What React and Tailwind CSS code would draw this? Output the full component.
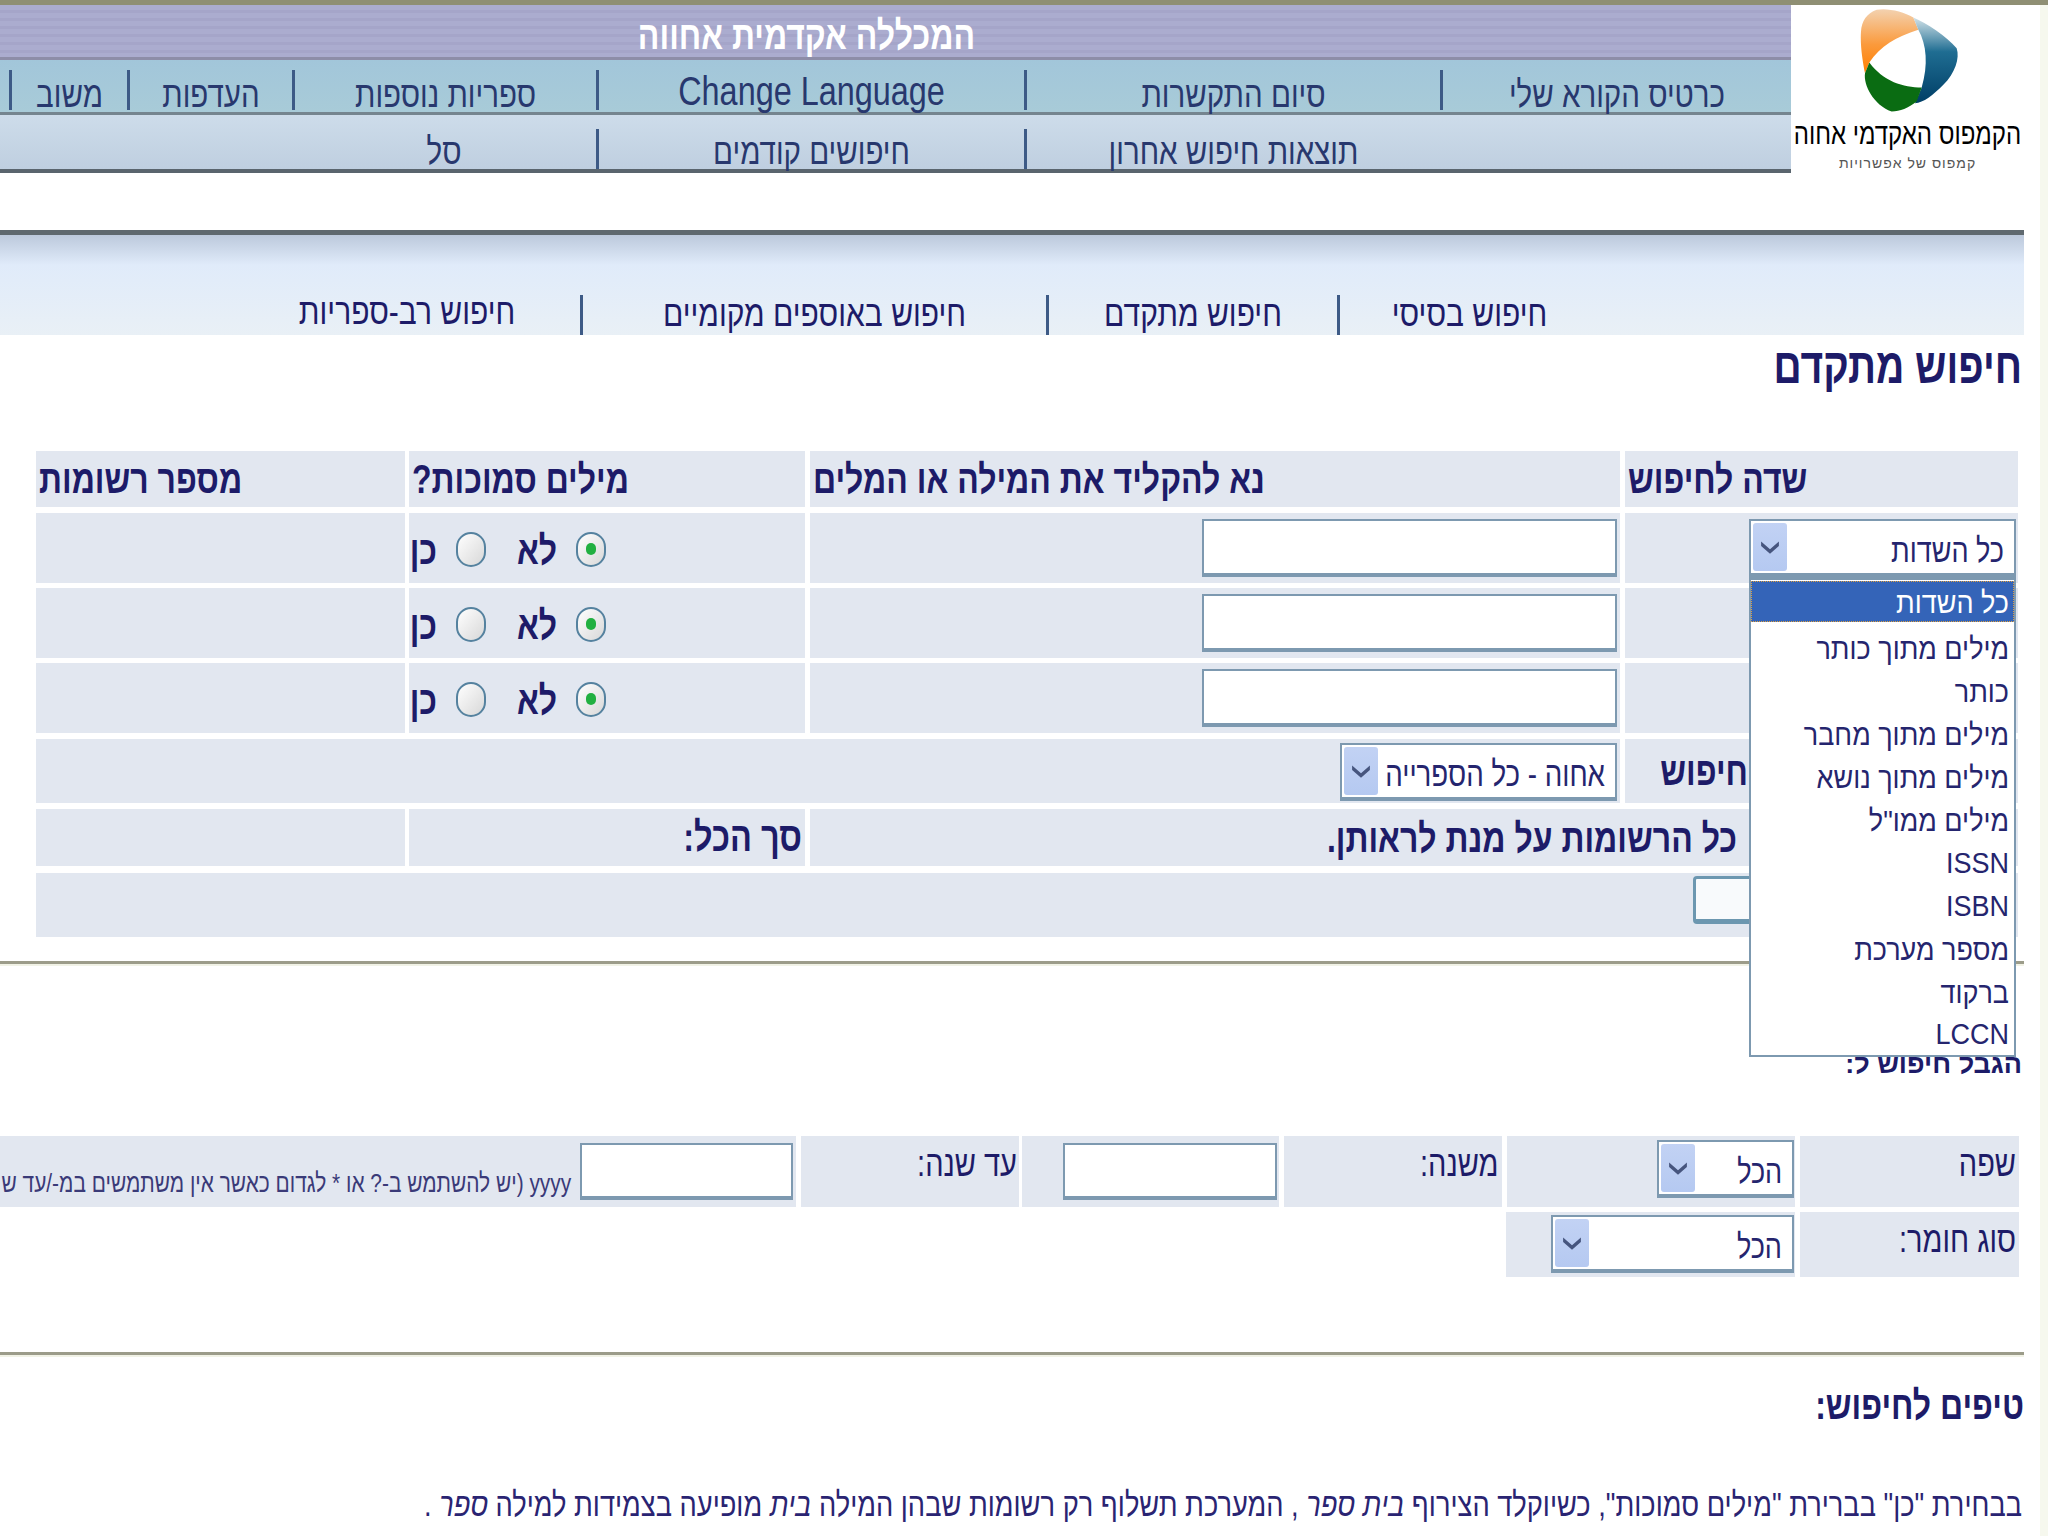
import React from "react";

const navy = "text-[#1d1b68]";

function Chevron() {
  return (
    <svg width="20" height="20" viewBox="0 0 18 18">
      <path d="M1 4 L9 11 L17 4 L17 8 L9 15 L1 8 Z" fill="#46557e" />
    </svg>
  );
}

function Select({ label, widthClass, textClass }) {
  return (
    <div className={`flex items-center justify-between h-[58px] bg-white border-2 border-b-4 border-[#7d99b0] pr-[10px] pl-[2px] ${widthClass}`}>
      <span className={`inline-block scale-y-125 translate-y-[4px] text-[#25256e] ${textClass}`}>{label}</span>
      <div className="flex items-center justify-center w-[34px] h-[48px] rounded-[3px] bg-gradient-to-b from-[#c2d2f4] to-[#b5c9f1]">
        <Chevron />
      </div>
    </div>
  );
}

function Radio({ checked }) {
  return (
    <div className="flex items-center justify-center w-[30px] h-[35px] rounded-full border-2 border-[#55829f] bg-gradient-to-br from-white to-[#d8d8d8] translate-y-[1px]">
      {checked && <div className="w-[10px] h-[12px] rounded-full bg-[#22b040]" />}
    </div>
  );
}

function RadioCell() {
  return (
    <div className="w-[396px] bg-[#e2e7f0] flex items-center pr-[199px] text-[32px] font-bold leading-none text-[#1d1b68]">
      <Radio checked />
      <span className="mr-[19px] w-[37px] inline-block scale-y-125 translate-y-[2px] whitespace-nowrap">לא</span>
      <div className="mr-[34px]"><Radio /></div>
      <span className="mr-[19px] inline-block scale-y-125 translate-y-[2px]">כן</span>
    </div>
  );
}

function TermRow({ first }) {
  return (
    <div className="flex gap-[5px] h-[70px] mt-[5px]">
      <div className="w-[393px] bg-[#e2e7f0] flex items-center pr-[2px]">
        {first && <Select label="כל השדות" widthClass="w-[267px]" textClass="text-[27px]" />}
      </div>
      <div className="w-[810px] bg-[#e2e7f0] flex items-center pr-[3px]">
        <input className="w-[415px] h-[58px] bg-white border-2 border-b-4 border-[#7d99b0]" />
      </div>
      <RadioCell />
      <div className="w-[369px] bg-[#e2e7f0] -mr-px" />
    </div>
  );
}

function HeadCell({ widthClass, children }) {
  return (
    <div className={`${widthClass} h-full bg-[#e2e7f0] flex items-center justify-end pl-[3px]`}>
      <span className={`inline-block scale-y-125 text-[32px] font-bold whitespace-nowrap ${navy}`}>{children}</span>
    </div>
  );
}

function Logo() {
  return (
    <div className="w-[249px] h-[168px] bg-white flex flex-col items-center relative">
      <svg width="100" height="107" viewBox="240 20 300 320" className="mt-[3px] -translate-x-[6px]">
        <defs>
          <linearGradient id="org" x1="0" y1="0" x2="0" y2="1">
            <stop offset="0" stopColor="#f3d2b0" />
            <stop offset="0.55" stopColor="#fb9a3c" />
            <stop offset="1" stopColor="#ff7f00" />
          </linearGradient>
          <linearGradient id="blu" x1="0" y1="0" x2="0" y2="1">
            <stop offset="0" stopColor="#d2e2e8" />
            <stop offset="0.4" stopColor="#1f6d92" />
            <stop offset="1" stopColor="#003e66" />
          </linearGradient>
        </defs>
        <path d="M268 183 C300 135 350 105 415 85 L400 48 C370 30 320 18 290 25 C260 35 245 60 243 90 C240 130 248 180 255 215 Z" fill="url(#org)" />
        <path d="M400 48 C440 65 500 105 530 140 C540 170 525 215 490 250 C460 280 430 305 405 305 L425 258 C445 190 440 130 415 85 Z" fill="url(#blu)" />
        <path d="M255 215 C250 250 280 310 335 330 C360 330 385 320 410 300 L425 258 C370 258 310 240 268 183 Z" fill="#0a6c12" />
      </svg>
      <span className="mt-[3px] inline-block scale-y-125 -translate-x-[8px] text-[24px] leading-[32px] text-black whitespace-nowrap">הקמפוס האקדמי אחוה</span>
      <span className="mt-[5px] -translate-x-[8px] text-[14px] tracking-[1px] leading-[16px] text-[#555] whitespace-nowrap">קמפוס של אפשרויות</span>
    </div>
  );
}

function NavCell({ widthClass, textClass = "text-[29.5px] translate-y-[5px]", children }) {
  return (
    <div className={`${widthClass} h-[40px] flex items-center justify-center border-l-[3px] border-[#3d5a86]`}>
      <span className={`inline-block scale-y-125 text-[#28386e] whitespace-nowrap ${textClass}`}>{children}</span>
    </div>
  );
}

function Nav() {
  return (
    <div className="w-[1791px]">
      <div className="h-[55px] flex items-center pr-[816px] border-b-[3px] border-[#8d8da8] bg-[repeating-linear-gradient(180deg,#abaccf_0px,#abaccf_5px,#a5a5c9_5px,#a5a5c9_8px)]">
        <span className="inline-block scale-y-125 translate-y-[4px] text-[32px] font-bold text-white whitespace-nowrap">המכללה אקדמית אחווה</span>
      </div>
      <div className="h-[55px] flex items-end pb-[2px] border-b-[3px] border-[#75858f] bg-gradient-to-b from-[#a2c6da] to-[#a8cbd8]">
        <NavCell widthClass="w-[351px]">כרטיס הקורא שלי</NavCell>
        <NavCell widthClass="w-[416px]">סיום התקשרות</NavCell>
        <NavCell widthClass="w-[428px]" textClass="text-[32.4px] translate-y-[1px]"><span dir="ltr">Change Language</span></NavCell>
        <NavCell widthClass="w-[304px]">ספריות נוספות</NavCell>
        <NavCell widthClass="w-[165px]">העדפות</NavCell>
        <NavCell widthClass="w-[118px]">משוב</NavCell>
      </div>
      <div className="h-[58px] flex items-end pr-[351px] border-b-[4px] border-[#5a656e] bg-gradient-to-b from-[#cddcea] to-[#bfcfe0]">
        <NavCell widthClass="w-[416px]" textClass="text-[29.5px] translate-y-[3px]">תוצאות חיפוש אחרון</NavCell>
        <NavCell widthClass="w-[428px]" textClass="text-[29.5px] translate-y-[3px]">חיפושים קודמים</NavCell>
        <div className="w-[304px] h-[40px] flex items-center justify-center">
          <span className="inline-block scale-y-125 translate-y-[3px] text-[29.5px] text-[#28386e]">סל</span>
        </div>
      </div>
    </div>
  );
}

function Tab({ widthClass, border = true, textClass = "", children }) {
  return (
    <div className={`${widthClass} h-[40px] flex items-center justify-center ${border ? "border-l-[3px] border-[#3d5a86]" : ""}`}>
      <span className={`inline-block scale-y-125 text-[30px] text-[#1d1b68] whitespace-nowrap ${textClass}`}>{children}</span>
    </div>
  );
}

function Rule() {
  return <div className="h-[5px] border-t-[3px] border-[#9c9c8a] bg-[#f1f2e6]" />;
}

function DropdownMenu() {
  const items = [
    ["מילים מתוך כותר", "h-[43px]"],
    ["כותר", "h-[43px]"],
    ["מילים מתוך מחבר", "h-[43px]"],
    ["מילים מתוך נושא", "h-[43px]"],
    ["מילים ממו\"ל", "h-[42px]"],
    ["ISSN", "h-[43px]"],
    ["ISBN", "h-[43px]"],
    ["מספר מערכת", "h-[44px]"],
    ["ברקוד", "h-[42px]"],
    ["LCCN", "h-[40px]"],
  ];
  return (
    <div className="absolute left-[1749px] top-[576px] w-[267px] h-[481px] bg-white border-2 border-t-[4px] border-[#7d99b0] pt-[1px] text-[27px] text-[#25256e]">
      <div className="h-[41px] flex items-center pr-[4px] bg-[#3464b8] text-white border border-dotted border-[#e0a040]">
        <span className="inline-block scale-y-110 translate-y-[2px]">כל השדות</span>
      </div>
      <div className="pt-[5px]">
        {items.map(([label, h]) => (
          <div key={label} className={`${h} flex items-center pr-[5px] whitespace-nowrap`}>
            <span className="inline-block scale-y-110 translate-y-[1px]">{label}</span>
          </div>
        ))}
      </div>
    </div>
  );
}

export default function App() {
  return (
    <div dir="rtl" className="relative w-[2048px] h-[1536px] overflow-hidden bg-white font-['Liberation_Sans',sans-serif]">
      <div className="h-[5px] bg-[#8f8f74]" />
      <div className="flex">
        <div className="w-[8px] h-[1531px] bg-[#f6f8ee]" />
        <div className="w-[2040px]">
          <div className="flex">
            <Logo />
            <Nav />
          </div>

          <div className="mr-[16px] w-[2024px]">
            <div className="mt-[57px] h-[105px] border-t-[5px] border-[#5f696f] bg-gradient-to-b from-[#bcc9dc] via-[#e0ebfa] via-30% to-[#e9f0f6] flex items-end pr-[425px]">
              <Tab widthClass="w-[262px]" textClass="-translate-y-[3px]">חיפוש בסיסי</Tab>
              <Tab widthClass="w-[291px]" textClass="-translate-y-[3px]">חיפוש מתקדם</Tab>
              <Tab widthClass="w-[466px]" textClass="-translate-y-[3px]">חיפוש באוספים מקומיים</Tab>
              <Tab widthClass="w-[346px]" border={false} textClass="-translate-y-[5px]">חיפוש רב-ספריות</Tab>
            </div>

            <div className={`h-[64px] flex items-center pr-[2px] text-[39px] font-bold ${navy}`}>
              <span className="inline-block scale-y-125">חיפוש מתקדם</span>
            </div>

            <div className="mt-[52px] mr-[6px] w-[1982px]">
              <div className="flex gap-[5px] h-[56px]">
                <HeadCell widthClass="w-[393px]">שדה לחיפוש</HeadCell>
                <HeadCell widthClass="w-[810px]">נא להקליד את המילה או המלים</HeadCell>
                <HeadCell widthClass="w-[396px]">מילים סמוכות?</HeadCell>
                <HeadCell widthClass="w-[369px] -mr-px">מספר רשומות</HeadCell>
              </div>
              <div className="h-[1px]" />
              <TermRow first />
              <TermRow />
              <TermRow />
              <div className="flex gap-[5px] h-[64px] mt-[6px]">
                <div className={`w-[393px] bg-[#e2e7f0] flex items-center pr-[270px] text-[32px] font-bold ${navy}`}>
                  <span className="inline-block scale-y-125">חיפוש</span>
                </div>
                <div className="w-[1584px] bg-[#e2e7f0] flex items-center pr-[3px]">
                  <Select label="אחוה - כל הספרייה" widthClass="w-[277px] translate-y-[1px]" textClass="text-[27.7px] whitespace-nowrap" />
                </div>
              </div>
              <div className="flex gap-[5px] h-[57px] mt-[6px]">
                <div className={`w-[1208px] bg-[#e2e7f0] flex items-center pr-[281px] text-[32px] font-bold ${navy}`}>
                  <span className="inline-block scale-y-125 whitespace-nowrap">כל הרשומות על מנת לראותן.</span>
                </div>
                <div className={`w-[396px] bg-[#e2e7f0] flex items-center pr-[3px] text-[32.5px] font-bold ${navy}`}>
                  <span className="inline-block scale-y-125">סך הכל:</span>
                </div>
                <div className="w-[369px] bg-[#e2e7f0] -mr-px" />
              </div>
              <div className="h-[64px] mt-[7px] bg-[#e2e7f0] flex items-start pt-[3px] pr-[200px]">
                <button className="w-[125px] h-[48px] rounded-[4px] bg-[#f8fafc] border-[3px] border-b-[5px] border-[#6c97b0]" />
              </div>
            </div>

            <div className="mt-[24px]"><Rule /></div>

            <div className={`mt-[83px] h-[30px] pr-[2px] text-[27px] font-bold ${navy} leading-[30px]`}>הגבל חיפוש ל:</div>

            <div className="mt-[57px] flex gap-[5px] mr-[5px] h-[71px]">
              <div className="w-[219px] bg-[#e2e7f0] pr-[3px] pt-[7px] text-[29px] text-[#1d1b68]">
                <span className="inline-block scale-y-125">שפה</span>
              </div>
              <div className="w-[289px] bg-[#e2e7f0] pr-[1px] pt-[4px]">
                <Select label="הכל" widthClass="w-[137px]" textClass="text-[27px]" />
              </div>
              <div className="w-[218px] bg-[#e2e7f0] pr-[3px] pt-[7px] text-[29px] text-[#1d1b68]">
                <span className="inline-block scale-y-125">משנה:</span>
              </div>
              <div className="w-[257px] bg-[#e2e7f0] pr-[2px] pt-[7px]">
                <input className="w-[214px] h-[57px] bg-white border-2 border-b-4 border-[#7d99b0]" />
              </div>
              <div className="w-[218px] bg-[#e2e7f0] -mr-[2px] pr-[2px] pt-[7px] text-[29px] text-[#1d1b68]">
                <span className="inline-block scale-y-125">עד שנה:</span>
              </div>
              <div className="w-[797px] bg-[#e2e7f0] flex items-start pr-[3px] pt-[7px] overflow-hidden">
                <input className="w-[213px] h-[57px] bg-white border-2 border-b-4 border-[#7d99b0] shrink-0" />
                <span className="mr-[9px] mt-[24px] inline-block scale-y-125 text-[20.9px] text-[#3a3a78] whitespace-nowrap">yyyy (יש להשתמש ב-? או * לגדום כאשר אין משתמשים במ-/עד ש</span>
              </div>
            </div>
            <div className="mt-[5px] mr-[5px] flex gap-[5px] h-[65px]">
              <div className="w-[219px] bg-[#e2e7f0] pr-[3px] pt-[7px] text-[29px] text-[#1d1b68]">
                <span className="inline-block scale-y-125">סוג חומר:</span>
              </div>
              <div className="w-[289px] bg-[#e2e7f0] pr-[1px] pt-[3px]">
                <Select label="הכל" widthClass="w-[243px]" textClass="text-[27px]" />
              </div>
            </div>

            <div className="mt-[75px]"><Rule /></div>

            <div className={`mt-[26px] h-[44px] flex items-center text-[32px] font-bold ${navy}`}>
              <span className="inline-block scale-y-125">טיפים לחיפוש:</span>
            </div>

            <div className="mt-[58px] pr-[2px] text-[27.25px] leading-[40px] text-[#2a2472] whitespace-nowrap">
              <span className="inline-block scale-y-125">
                בבחירת "כן" בברירת "מילים סמוכות", כשיוקלד הצירוף <i>בית ספר</i> , המערכת תשלוף רק רשומות שבהן המילה <i>בית</i> מופיעה בצמידות למילה <i>ספר</i> .
              </span>
            </div>
          </div>
        </div>
      </div>
      <DropdownMenu />
    </div>
  );
}
